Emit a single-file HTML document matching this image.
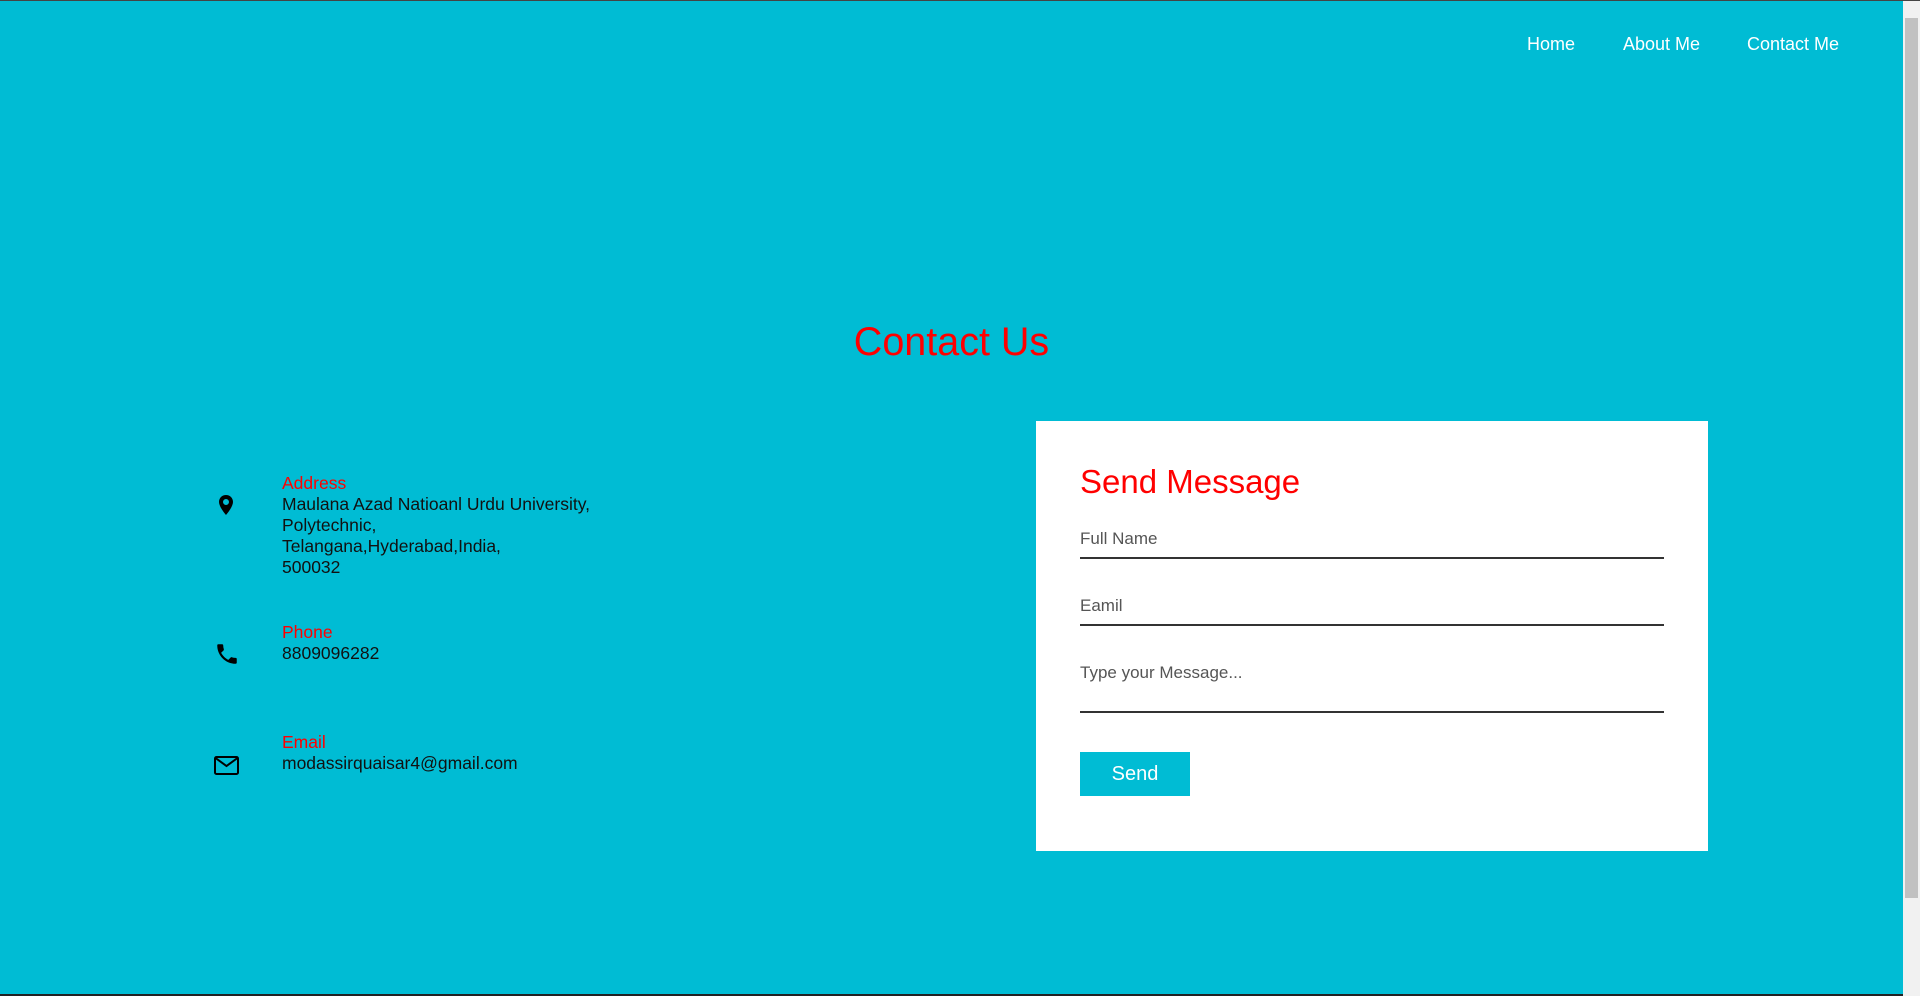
<!DOCTYPE html>
<html><head><meta charset="utf-8"><style>
*{margin:0;padding:0;box-sizing:border-box}
html,body{width:1920px;height:996px;overflow:hidden}
body{background:#00bcd4;font-family:"Liberation Sans",Arial,sans-serif;position:relative;border-top:1px solid #444}
.bot{position:absolute;left:0;top:993px;width:1903px;height:3px;background:#222}
.sb{position:absolute;right:0;top:0;width:17px;height:996px;background:#f1f1f1}
.sb .th{position:absolute;left:2px;top:17px;width:13px;height:880px;background:#c1c1c1}
.nav a{position:absolute;top:33px;color:#fff;font-size:18px;text-decoration:none}
h1{position:absolute;left:0;width:1903px;top:319px;text-align:center;color:#f00;font-size:39.5px;font-weight:normal}
.lbl{position:absolute;left:282px;color:#f00;font-size:17.5px}
.txt{position:absolute;left:282px;color:#111;font-size:17.5px;line-height:21px}
.ic{position:absolute}
.card{position:absolute;left:1036px;top:420px;width:672px;height:430px;background:#fff}
.card h2{position:absolute;left:44px;top:42px;color:#f00;font-size:33px;font-weight:normal}
.f{position:absolute;left:44px;width:584px;border-bottom:2px solid #333;color:#555;font-size:17px}
.btn{position:absolute;left:44px;top:331px;width:110px;height:44px;background:#00bcd4;color:#fff;font-size:20px;text-align:center;line-height:44px}
</style></head><body>
<div class="nav"><a style="left:1527px">Home</a><a style="left:1623px">About Me</a><a style="left:1747px">Contact Me</a></div>
<h1>Contact Us</h1>
<svg class="ic" style="left:219px;top:494px" width="14" height="20" viewBox="0 0 14 20"><path d="M7 0C3 0 0 3 0 7c0 5 7 13 7 13s7-8 7-13c0-4-3-7-7-7zm0 10a3 3 0 110-6 3 3 0 010 6z" fill="#000"/></svg>
<div class="lbl" style="top:472px">Address</div>
<div class="txt" style="top:493px">Maulana Azad Natioanl Urdu University,<br>Polytechnic,<br>Telangana,Hyderabad,India,<br>500032</div>
<svg class="ic" style="left:214px;top:640px" width="26" height="26" viewBox="0 0 24 24"><path d="M6.6 10.8c1.4 2.8 3.8 5.1 6.6 6.6l2.2-2.2c.3-.3.7-.4 1-.2 1.1.4 2.3.6 3.6.6.6 0 1 .4 1 1V20c0 .6-.4 1-1 1C10.6 21 3 13.4 3 4c0-.6.4-1 1-1h3.5c.6 0 1 .4 1 1 0 1.3.2 2.5.6 3.6.1.3 0 .7-.2 1L6.6 10.8z" fill="#000"/></svg>
<div class="lbl" style="top:621px">Phone</div>
<div class="txt" style="top:642px">8809096282</div>
<svg class="ic" style="left:214px;top:755px" width="25" height="19" viewBox="0 0 25 19"><rect x="1" y="1" width="23" height="17" rx="1.5" fill="none" stroke="#000" stroke-width="2"/><path d="M1.5 2l11 8 11-8" fill="none" stroke="#000" stroke-width="2"/></svg>
<div class="lbl" style="top:731px">Email</div>
<div class="txt" style="top:752px">modassirquaisar4@gmail.com</div>
<div class="card">
<h2>Send Message</h2>
<div class="f" style="top:108px;height:30px">Full Name</div>
<div class="f" style="top:175px;height:30px">Eamil</div>
<div class="f" style="top:242px;height:50px">Type your Message...</div>
<div class="btn">Send</div>
</div>
<div class="bot"></div>
<div class="sb"><div class="th"></div></div>
</body></html>
